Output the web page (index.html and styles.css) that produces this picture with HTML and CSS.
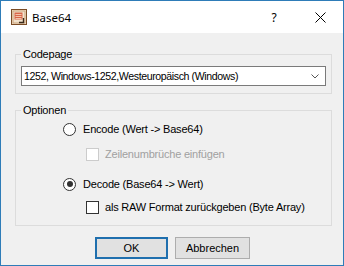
FILE: index.html
```html
<!DOCTYPE html>
<html>
<head>
<meta charset="utf-8">
<link rel="stylesheet" href="styles.css">
</head>
<body>
<div class="window">
  <div class="titlebar">
    <svg class="app-icon" width="16" height="16" viewBox="0 0 16 16">
      <rect x="0.5" y="0.5" width="15" height="15" fill="#f2e2cc" stroke="#7a4b24"/>
      <rect x="2" y="2" width="12" height="12" fill="none" stroke="#c9a27a"/>
      <rect x="3.5" y="3.5" width="8" height="7" fill="#d8674a"/>
      <path d="M4.5 5.5h6M4.5 7.5h6M4.5 9.5h6" stroke="#f4c2aa"/>
      <path d="M12.5 9v4.5H8" stroke="#3a2a1a" fill="none" stroke-width="1.4"/>
    </svg>
    <span class="title">Base64</span>
    <span class="caption-btn help">?</span>
    <span class="caption-btn close">
      <svg width="11" height="11" viewBox="0 0 11 11"><path d="M0.5 0.5L10.5 10.5M10.5 0.5L0.5 10.5" stroke="#000" stroke-width="1"/></svg>
    </span>
  </div>
  <div class="client">
    <fieldset class="group group-codepage">
      <legend>Codepage</legend>
      <div class="combo">
        <span class="combo-text">1252, Windows-1252,Westeuropäisch (Windows)</span>
        <svg class="chevron" width="8" height="5" viewBox="0 0 8 5"><path d="M0.5 0.5L4 4L7.5 0.5" stroke="#555" fill="none"/></svg>
      </div>
    </fieldset>
    <fieldset class="group group-options">
      <legend>Optionen</legend>
      <div class="opt opt-radio r1"><span class="radio"></span><span>Encode (Wert -&gt; Base64)</span></div>
      <div class="opt opt-check r2 disabled"><span class="check"></span><span>Zeilenumbrüche einfügen</span></div>
      <div class="opt opt-radio r3"><span class="radio checked"></span><span>Decode (Base64 -&gt; Wert)</span></div>
      <div class="opt opt-check r4"><span class="check"></span><span>als RAW Format zurückgeben (Byte Array)</span></div>
    </fieldset>
    <div class="buttons">
      <button class="btn btn-default">OK</button>
      <button class="btn btn-cancel">Abbrechen</button>
    </div>
  </div>
</div>
</body>
</html>
```
FILE: styles.css
```css
html, body {
  margin: 0;
  padding: 0;
  background: #fff;
}
.window {
  width: 344px;
  height: 266px;
  box-sizing: border-box;
  border: 1px solid #2e7cb8;
  background: #f0f0f0;
  font-family: "Liberation Sans", Arial, sans-serif;
  font-size: 11px;
  color: #000;
  display: flex;
  flex-direction: column;
  overflow: hidden;
}
.titlebar {
  height: 32px;
  flex: none;
  background: #fff;
  display: flex;
  align-items: center;
}
.app-icon {
  margin-left: 10px;
  flex: none;
}
.title {
  margin-left: 5px;
  font-family: "Noto Sans", "Open Sans", sans-serif;
  font-size: 11.5px;
}
.caption-btn {
  width: 46px;
  height: 32px;
  display: flex;
  align-items: center;
  justify-content: center;
}
.help {
  margin-left: auto;
  font-family: "Noto Sans", "Open Sans", sans-serif;
  font-size: 12px;
}
.client {
  flex: 1;
  padding: 15px 0 0 14px;
  letter-spacing: -0.2px;
}
.group {
  margin: 0;
  width: 317px;
  box-sizing: border-box;
  min-width: 0;
  border: 1px solid #dcdcdc;
  padding: 0 5px 7px;
}
.group legend {
  padding: 0 2px;
  line-height: 13px;
  font-size: 11px;
}
.combo {
  margin-top: 5px;
  height: 20px;
  box-sizing: border-box;
  border: 1px solid #7a7a7a;
  background: #fff;
  display: flex;
  align-items: center;
  padding-left: 2px;
}
.combo-text {
  font-size: 10.6px;
  letter-spacing: -0.4px;
}
.chevron {
  margin-left: auto;
  margin-right: 6px;
}
.group-options {
  margin-top: 10px;
  padding-bottom: 11px;
}
.opt {
  display: flex;
  align-items: center;
  height: 14px;
}
.opt-radio { padding-left: 42px; }
.opt-check { padding-left: 65px; }
.r1 { margin-top: 5px; }
.r2 { margin-top: 11px; }
.r3 { margin-top: 16px; }
.r4 { margin-top: 9px; }
.radio {
  width: 13px;
  height: 13px;
  box-sizing: border-box;
  border: 1px solid #333;
  border-radius: 50%;
  background: #fff;
  margin-right: 7px;
  display: flex;
  align-items: center;
  justify-content: center;
}
.radio.checked::after {
  content: "";
  width: 6px;
  height: 6px;
  border-radius: 50%;
  background: #333;
}
.check {
  width: 13px;
  height: 13px;
  box-sizing: border-box;
  border: 1px solid #333;
  background: #fff;
  margin-right: 6px;
}
.disabled { color: #a0a0a0; }
.disabled .check { border-color: #cccccc; }
.buttons {
  margin-top: 11px;
  display: flex;
  gap: 7px;
  padding-left: 80px;
}
.btn {
  height: 22px;
  box-sizing: border-box;
  background: #e1e1e1;
  border: 1px solid #adadad;
  font-family: "Liberation Sans", Arial, sans-serif;
  font-size: 11px;
  letter-spacing: 0;
  color: #000;
  padding: 0;
  margin: 0;
}
.btn-default {
  width: 73px;
  border: 2px solid #1f6fae;
}
.btn-cancel {
  width: 75px;
}
```
